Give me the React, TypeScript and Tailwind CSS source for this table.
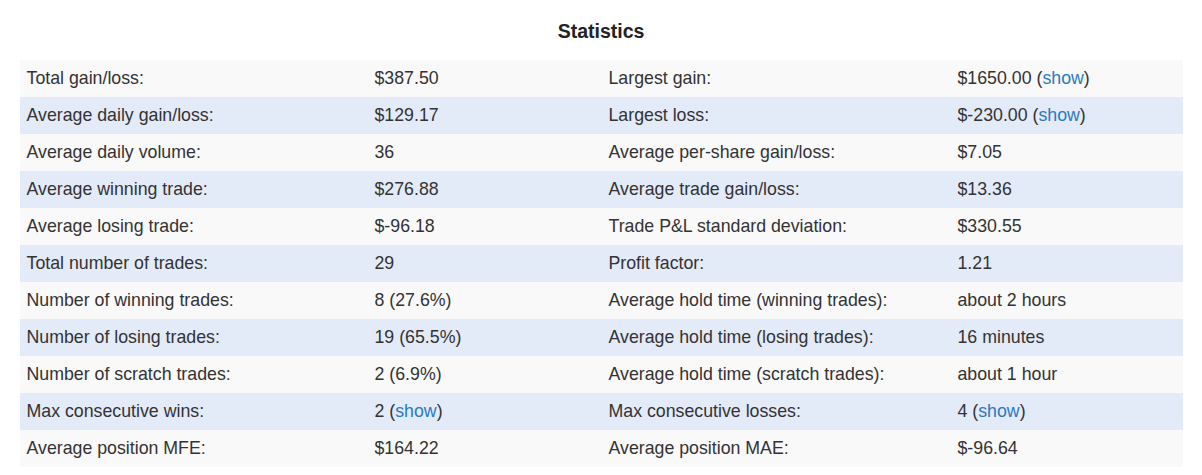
const rows: [string, React.ReactNode, string, React.ReactNode][] = [
  ["Total gain/loss:", "$387.50", "Largest gain:", <>$1650.00 (<Show />)</>],
  ["Average daily gain/loss:", "$129.17", "Largest loss:", <>$-230.00 (<Show />)</>],
  ["Average daily volume:", "36", "Average per-share gain/loss:", "$7.05"],
  ["Average winning trade:", "$276.88", "Average trade gain/loss:", "$13.36"],
  ["Average losing trade:", "$-96.18", "Trade P&L standard deviation:", "$330.55"],
  ["Total number of trades:", "29", "Profit factor:", "1.21"],
  ["Number of winning trades:", "8 (27.6%)", "Average hold time (winning trades):", "about 2 hours"],
  ["Number of losing trades:", "19 (65.5%)", "Average hold time (losing trades):", "16 minutes"],
  ["Number of scratch trades:", "2 (6.9%)", "Average hold time (scratch trades):", "about 1 hour"],
  ["Max consecutive wins:", <>2 (<Show />)</>, "Max consecutive losses:", <>4 (<Show />)</>],
  ["Average position MFE:", "$164.22", "Average position MAE:", "$-96.64"],
];

function Show() {
  return <a className="cursor-pointer text-[#2a7bbf]">show</a>;
}

export default function App() {
  return (
    <div className="min-h-[475px] bg-white font-['Liberation_Sans',Arial,sans-serif] text-[#333]">
      <h2 className="flex h-[60px] items-center justify-center pt-1 text-[19.5px] font-bold text-[#222]">
        Statistics
      </h2>
      <div className="mx-auto w-[1163px]">
        {rows.map((r, i) => (
          <div
            key={i}
            className={`grid h-[37px] grid-cols-[348px_234px_349px_232px] items-center text-[17.75px] ${
              i % 2 === 0 ? "bg-[#f9f9f9]" : "bg-[#e3eaf8]"
            }`}
          >
            {r.map((c, j) => (
              <div key={j} className="px-[7px] whitespace-nowrap">
                {c}
              </div>
            ))}
          </div>
        ))}
      </div>
    </div>
  );
}
